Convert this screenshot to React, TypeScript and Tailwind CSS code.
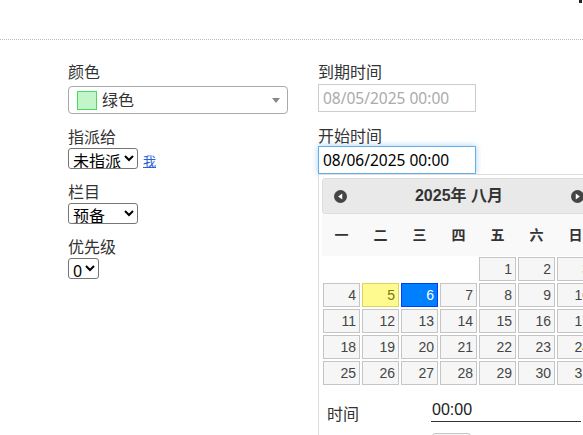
import React from "react";

const weeks: (number | null)[][] = [
  [null, null, null, null, 1, 2, 3],
  [4, 5, 6, 7, 8, 9, 10],
  [11, 12, 13, 14, 15, 16, 17],
  [18, 19, 20, 21, 22, 23, 24],
  [25, 26, 27, 28, 29, 30, 31],
];

const dayNames = ["一", "二", "三", "四", "五", "六", "日"];

function NavIcon({ dir }: { dir: "prev" | "next" }) {
  return (
    <svg width="13" height="13" viewBox="0 0 12 12">
      <circle cx="6" cy="6" r="6" fill="#454545" />
      {dir === "prev" ? (
        <path d="M7.6 3.2 L3.8 6 L7.6 8.8 Z" fill="#fff" />
      ) : (
        <path d="M4.4 3.2 L8.2 6 L4.4 8.8 Z" fill="#fff" />
      )}
    </svg>
  );
}

function Label({ children }: { children: React.ReactNode }) {
  return <div className="text-base leading-5 text-[#333]">{children}</div>;
}

function DayCell({ day }: { day: number | null }) {
  if (day === null) return <div className="h-[26px]" />;
  let cls = "bg-[#f6f6f6] border-[#c5c5c5] text-[#454545]";
  if (day === 5) cls = "bg-[#fffa90] border-[#dad55e] text-[#777620]";
  if (day === 6) cls = "bg-[#007fff] border-[#003eff] text-white";
  return (
    <div className="p-px h-[26px]">
      <div className={`h-[24px] border ${cls} flex items-center justify-end pr-[3px] text-[14px]`}>
        {day}
      </div>
    </div>
  );
}

export default function App() {
  return (
    <div className="w-[583px] h-[435px] overflow-hidden bg-white text-[#333] font-['Noto_Sans','Noto_Sans_CJK_SC',sans-serif]">
      <div className="h-[39px] flex justify-end items-start">
        <div className="w-[3px] h-[3px] bg-[#222] mr-px" />
      </div>
      <div className="border-t border-dotted border-[#bbb]" />

      <div className="flex pt-[22px]">
        {/* left column */}
        <div className="w-[318px] pl-[68px] shrink-0">
          <Label>颜色</Label>
          <div className="mt-[4px] w-[220px] h-[28px] border border-[#aaa] rounded-[4px] flex items-center pl-[8px] pr-[7px]">
            <div className="w-[20px] h-[19px] bg-[#c3f5ca] border border-[#4cd964]" />
            <span className="ml-[5px] text-base text-[#333]">绿色</span>
            <div className="ml-auto w-0 h-0 border-l-[4px] border-r-[4px] border-t-[5px] border-l-transparent border-r-transparent border-t-[#888]" />
          </div>

          <div className="mt-[13px]">
            <Label>指派给</Label>
            <div className="mt-px flex items-end">
              <select className="block w-[70px] h-[21px] border border-[#767676] rounded-[3px] text-base text-black leading-none bg-white">
                <option>未指派</option>
              </select>
              <a href="#" className="ml-[5px] text-[13px] leading-4 text-[#2a62d6] underline">我</a>
            </div>
          </div>

          <div className="mt-[13px]">
            <Label>栏目</Label>
            <select className="block mt-px w-[70px] h-[21px] border border-[#767676] rounded-[3px] text-base text-black leading-none bg-white">
              <option>预备</option>
            </select>
          </div>

          <div className="mt-[13px]">
            <Label>优先级</Label>
            <select className="block mt-px w-[31px] h-[21px] border border-[#767676] rounded-[3px] text-base text-black leading-none bg-white">
              <option>0</option>
            </select>
          </div>
        </div>

        {/* right column */}
        <div className="shrink-0">
          <Label>到期时间</Label>
          <input
            disabled
            value="08/05/2025 00:00"
            readOnly
            className="mt-[2px] block w-[158px] h-[28px] border border-[#ccc] px-[4px] text-[15.5px] text-[#aaa] bg-white"
          />
          <div className="mt-[14px]">
            <Label>开始时间</Label>
            <input
              value="08/06/2025 00:00"
              readOnly
              className="block w-[158px] h-[28px] border border-[#66afe9] shadow-[0_0_6px_rgba(102,175,233,0.6)] px-[4px] text-[15.5px] text-black bg-white outline-none"
            />
          </div>

          {/* datepicker */}
          <div className="w-[281px] border border-[#ddd] p-[3px] bg-white font-['Liberation_Sans','Noto_Sans_CJK_SC',sans-serif]">
            <div className="h-[36px] bg-[#e9e9e9] border border-[#ddd] rounded-[3px] flex items-center justify-between pl-[11px] pr-[10px]">
              <NavIcon dir="prev" />
              <span className="text-base font-bold text-[#333]">2025年 八月</span>
              <NavIcon dir="next" />
            </div>
            <div className="grid grid-cols-7 h-[42px] bg-[#f9f9f9] items-center">
              {dayNames.map((d) => (
                <div key={d} className="text-center text-[14px] font-bold text-[#333]">
                  {d}
                </div>
              ))}
            </div>
            <div className="grid grid-cols-7">
              {weeks.flat().map((d, i) => (
                <DayCell key={i} day={d} />
              ))}
            </div>

            <div className="mt-[12px] flex items-start">
              <div className="w-[109px] pl-[5px] pt-[5px] text-base leading-5 text-[#333] font-['Noto_Sans_CJK_SC',sans-serif]">时间</div>
              <div className="w-[150px] h-[24px] border-b border-[#333] text-base leading-5 text-[#222] pl-[1px] pt-[2px]">00:00</div>
            </div>
            <div className="mt-[10px] ml-[110px] w-[39px] h-[24px] border border-[#c5c5c5] rounded-[3px] bg-[#f6f6f6]" />
          </div>
        </div>
      </div>
    </div>
  );
}
